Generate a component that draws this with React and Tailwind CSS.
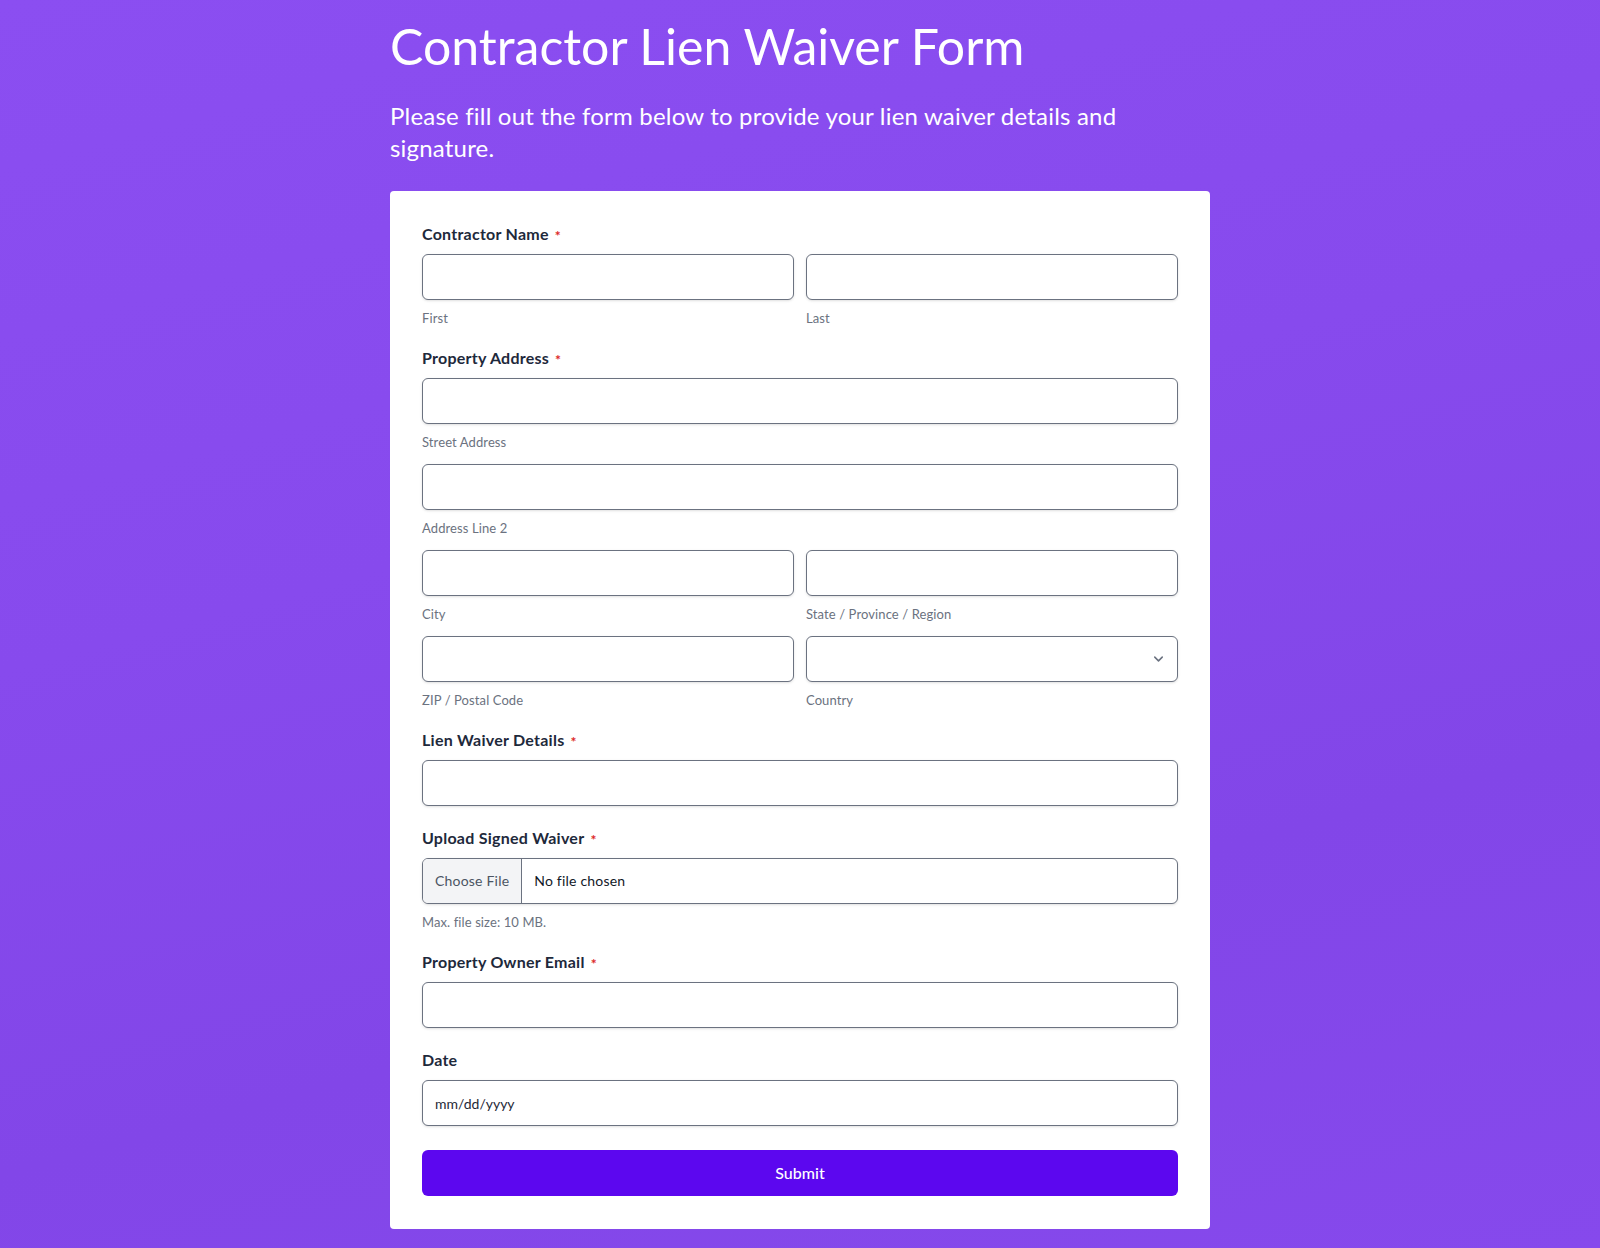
import React from 'react';
import { ChevronDown } from 'lucide-react';

// --- Small form building blocks ---
const Label = ({ children, required }) => (
  <div className="flex items-center text-base leading-6 font-bold tracking-[0.25px] text-[#1e293b]">
    {children}
    {required && <span className="ml-1.5 translate-y-[2px] text-sm leading-none text-[#dc2626]">*</span>}
  </div>
);

const SubLabel = ({ children }) => (
  <p className="mt-2 text-[13px] leading-5 tracking-[0.1px] text-[#6b7280]">{children}</p>
);

const inputCls =
  'block h-[46px] w-full rounded-md border border-[#6b7280] bg-white px-3 text-sm text-[#1f2937] shadow-sm outline-none';

const TextInput = (props) => <input type="text" className={inputCls} {...props} />;

const App = () => {
  return (
    <div className="min-h-screen bg-[#8649ec] bg-[linear-gradient(165deg,#8b4ef1_0%,#874aed_40%,#8246e8_70%,#8649ec_100%)] font-['Lato','Noto_Sans',sans-serif]">
      <div className="mx-auto w-[820px] pt-4 pb-5">
        <h1 className="text-[50px] leading-[1.2] font-normal text-white">Contractor Lien Waiver Form</h1>
        <p className="mt-6 text-2xl leading-8 tracking-[0.2px] text-white">
          Please fill out the form below to provide your lien waiver details and signature.
        </p>

        <form className="mt-[27px] rounded bg-white px-8 pt-[31px] pb-[33px]" onSubmit={(e) => e.preventDefault()}>
          {/* Contractor Name */}
          <Label required>Contractor Name</Label>
          <div className="mt-2 grid grid-cols-2 gap-3">
            <div>
              <TextInput />
              <SubLabel>First</SubLabel>
            </div>
            <div>
              <TextInput />
              <SubLabel>Last</SubLabel>
            </div>
          </div>

          {/* Property Address */}
          <div className="mt-[18px]">
            <Label required>Property Address</Label>
            <div className="mt-2">
              <TextInput />
              <SubLabel>Street Address</SubLabel>
            </div>
            <div className="mt-3">
              <TextInput />
              <SubLabel>Address Line 2</SubLabel>
            </div>
            <div className="mt-3 grid grid-cols-2 gap-3">
              <div>
                <TextInput />
                <SubLabel>City</SubLabel>
              </div>
              <div>
                <TextInput />
                <SubLabel>State / Province / Region</SubLabel>
              </div>
            </div>
            <div className="mt-3 grid grid-cols-2 gap-3">
              <div>
                <TextInput />
                <SubLabel>ZIP / Postal Code</SubLabel>
              </div>
              <div>
                <div className="relative">
                  <select className={inputCls + ' appearance-none pr-8'} defaultValue="">
                    <option value=""></option>
                  </select>
                  <ChevronDown
                    size={15}
                    strokeWidth={2.5}
                    className="pointer-events-none absolute top-1/2 right-3 -translate-y-1/2 text-[#6b7280]"
                  />
                </div>
                <SubLabel>Country</SubLabel>
              </div>
            </div>
          </div>

          {/* Lien Waiver Details */}
          <div className="mt-[18px]">
            <Label required>Lien Waiver Details</Label>
            <div className="mt-2">
              <TextInput />
            </div>
          </div>

          {/* Upload */}
          <div className="mt-5">
            <Label required>Upload Signed Waiver</Label>
            <label className="mt-2 flex h-[46px] w-full cursor-pointer items-stretch overflow-hidden rounded-md border border-[#6b7280] bg-white text-sm shadow-sm">
              <span className="flex items-center border-r border-[#6b7280] bg-[#f3f4f6] px-3 tracking-[0.2px] text-[#4b5563]">Choose File</span>
              <span className="ml-3 flex items-center tracking-[0.2px] text-[#111827]">No file chosen</span>
              <input type="file" className="hidden" />
            </label>
            <SubLabel>Max. file size: 10 MB.</SubLabel>
          </div>

          {/* Email */}
          <div className="mt-[18px]">
            <Label required>Property Owner Email</Label>
            <div className="mt-2">
              <input type="email" className={inputCls} />
            </div>
          </div>

          {/* Date */}
          <div className="mt-5">
            <Label>Date</Label>
            <div className="mt-2">
              <TextInput placeholder="mm/dd/yyyy" className={inputCls + ' placeholder:text-[#1f2937]'} />
            </div>
          </div>

          <button
            type="submit"
            className="mt-6 h-[46px] w-full rounded-md bg-[#5c07ef] text-base font-medium text-white"
          >
            Submit
          </button>
        </form>
      </div>
    </div>
  );
};

export default App;
